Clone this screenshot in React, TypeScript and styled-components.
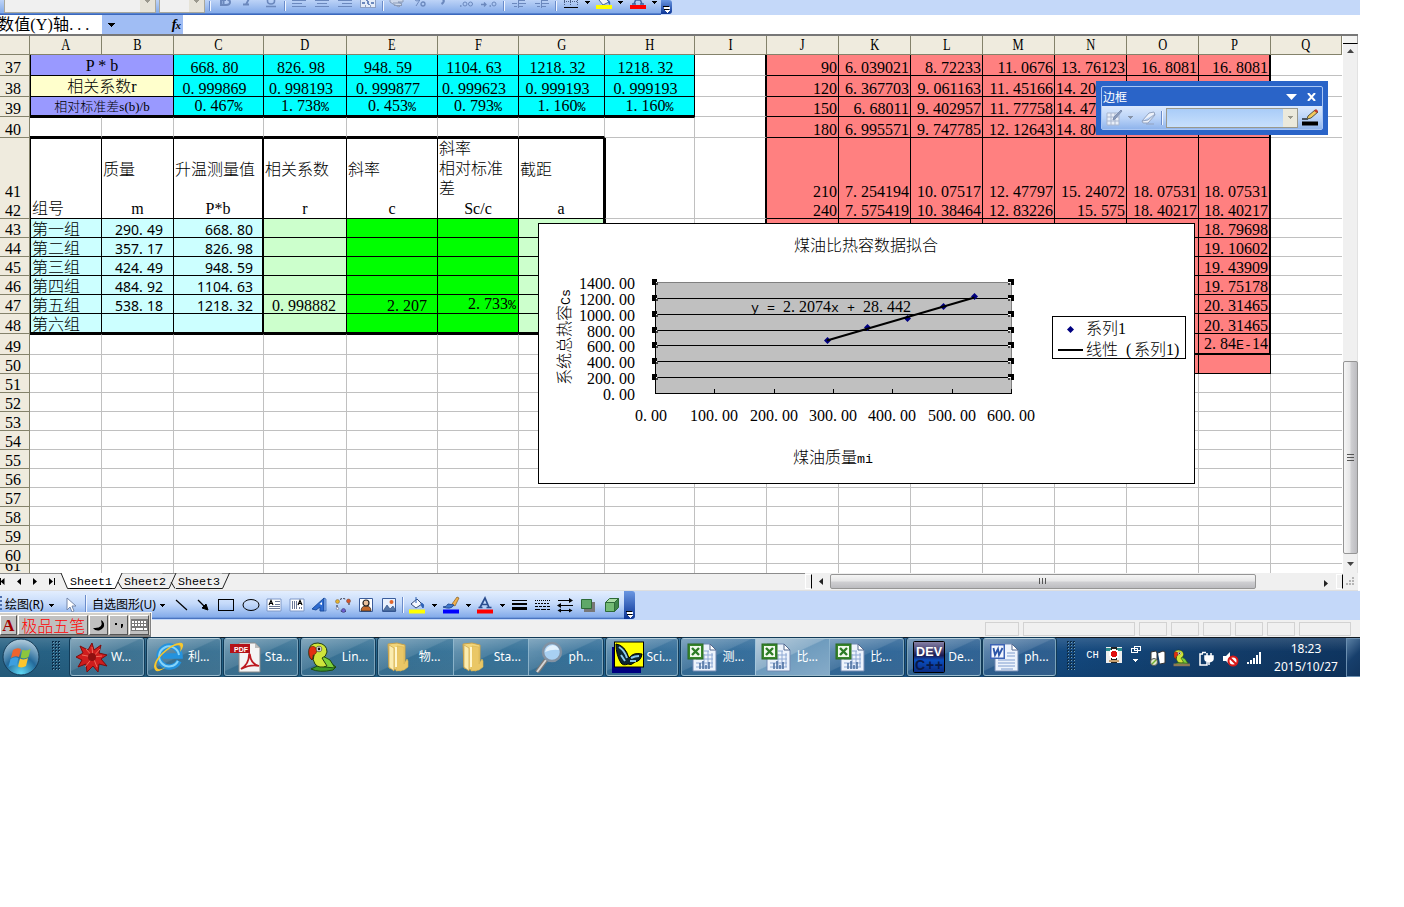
import React from "react";
import styled, { createGlobalStyle, css } from "styled-components";

const SERIF = `"Liberation Serif", "Noto Sans CJK SC", serif`;
const MONO = `"Liberation Mono", "Noto Sans CJK SC", monospace`;
const UI = `"Noto Sans", "Noto Sans CJK SC", sans-serif`;

const Global = createGlobalStyle`
  body { margin: 0; background: #fff; overflow: hidden; }
  * { box-sizing: border-box; }
`;

const Screen = styled.div`
  width: 1360px;
  height: 677px;
  position: relative;
  display: flex;
  flex-direction: column;
  overflow: hidden;
  background: #fff;
`;

/* ---------- text set on an 8px pitch ---------- */
const Dot = styled.span`
  letter-spacing: 4px;
`;
const Mono = styled.span`
  font-family: ${MONO};
  font-size: 13.33px;
`;
function Fixed({ text }: { text: string }) {
  return (
    <span>
      {text
        .split(/(\.|[%E\-])/)
        .filter(Boolean)
        .map((p, i) => (p === "." ? <Dot key={i}>.</Dot> : /[%E\-]/.test(p) ? <Mono key={i}>{p}</Mono> : p))}
    </span>
  );
}

/* ---------- top toolbar ---------- */
const TopBar = styled.div`
  display: flex;
  height: 15px;
  flex: none;
  background: #c4d8f9;
`;
const TopStrip = styled.div`
  display: flex;
  width: 661px;
  padding-left: 4px;
  background: linear-gradient(#bdd3f7, #84abe9 85%, #7ba2e2 86%, #3b68bd 93%);
  overflow: hidden;
`;
const Combo = styled.div<{ $w: number }>`
  width: ${(p) => p.$w}px;
  height: 13px;
  margin-right: 3px;
  display: flex;
  justify-content: flex-end;
  background: #f0f0f0;
  border: 1px solid #a9a89c;
  border-top: 0;
`;
const ComboArrow = styled.div`
  width: 15px;
  display: flex;
  justify-content: center;
  background: #e6e3d8;
`;
const Slot = styled.div<{ $w?: number }>`
  width: ${(p) => p.$w ?? 23}px;
  flex: none;
  display: flex;
  align-items: center;
  justify-content: center;
`;
const Sep = styled.div<{ $h: number; $m?: string }>`
  width: 2px;
  height: ${(p) => p.$h}px;
  margin: ${(p) => p.$m ?? "0 2px"};
  flex: none;
  align-self: center;
  background: linear-gradient(90deg, #6a8ccb 50%, #f1f6ff 50%);
`;
const Cap = styled.div<{ $h: number }>`
  width: 11px;
  height: ${(p) => p.$h}px;
  flex: none;
  display: flex;
  align-items: flex-end;
  justify-content: center;
  border-radius: 0 3px 3px 0;
  background: linear-gradient(#6a97e2, #0c3596);
`;
const CapMark = () => (
  <svg width="9" height="9" shapeRendering="crispEdges">
    <path d="M1 1h6" stroke="#000" strokeWidth="1" />
    <path d="M2 2.5h6" stroke="#fff" strokeWidth="2" />
    <path d="M1 4h6l-3 3z" fill="#000" />
    <path d="M2 5h6l-3 3z" fill="#fff" />
  </svg>
);
const Caret = ({ c = "#000" }: { c?: string }) => (
  <svg width="5" height="3" shapeRendering="crispEdges">
    <path d="M0 0h5v1h-1v1h-1v1h-1v-1h-1v-1h-1z" fill={c} />
  </svg>
);
const TopGlyph = styled.svg`
  width: 18px;
  height: 15px;
  display: block;
`;
const gc = "#6b88bd";

function TopToolbar() {
  const align = (s: number) => (
    <Slot key={s}>
      <TopGlyph shapeRendering="crispEdges">
        <path d={`M2 .5h14M${2 + s} 3.5h10M2 6.5h14`} stroke={gc} />
      </TopGlyph>
    </Slot>
  );
  return (
    <TopBar>
      <TopStrip>
        <Combo $w={152}>
          <ComboArrow>
            <Caret c="#9b998e" />
          </ComboArrow>
        </Combo>
        <Combo $w={46}>
          <ComboArrow>
            <Caret c="#9b998e" />
          </ComboArrow>
        </Combo>
        <Sep $h={10} $m="0 2px 4px 1px" />
        <Slot>
          <TopGlyph><path d="M5 -6h5q3 0 3 2.700t-2 2.600q3 .4 3 3t-4 2.700h-5zM7.500 0v4M5 0h5" fill="none" stroke={gc} strokeWidth="2" /></TopGlyph>
        </Slot>
        <Slot>
          <TopGlyph><path d="M12 -5L7 4.500M4 4.500h6" stroke={gc} strokeWidth="1.800" /></TopGlyph>
        </Slot>
        <Slot>
          <TopGlyph><path d="M5.500 -4v5q0 3 3.500 3t3.500-3v-5M4 6.500h10" fill="none" stroke={gc} strokeWidth="1.600" /></TopGlyph>
        </Slot>
        <Sep $h={10} $m="0 1px 4px 2px" />
        {[0, 2, 4].map(align)}
        <Slot>
          <TopGlyph shapeRendering="crispEdges">
            <path d="M1.500 -4v11h15v-11M1.500 -1h15M6.500 5v2M11.500 5v2" fill="#e4ecf8" stroke="#8b9fc4" />
            <path d="M3 2.500h3M12 2.500h3M8 0l2 5" stroke={gc} strokeWidth="2" />
          </TopGlyph>
        </Slot>
        <Sep $h={10} $m="0 1px 4px 3px" />
        <Slot>
          <TopGlyph><path d="M2 -1h13v3h-5l4 2-3 3-6-3-3-2zM6 5.500h8M5 3h9" fill="#cdd8ea" stroke="#8a9bb9" /></TopGlyph>
        </Slot>
        <Slot>
          <TopGlyph>
            <path d="M12 -5L5 6" stroke={gc} />
            <circle cx="6" cy="-1" r="2" fill="none" stroke={gc} />
            <circle cx="12" cy="4" r="2" fill="none" stroke={gc} strokeWidth="1.300" />
          </TopGlyph>
        </Slot>
        <Slot>
          <TopGlyph><path d="M9 -1q2 3-1.500 5" fill="none" stroke={gc} strokeWidth="2.200" /></TopGlyph>
        </Slot>
        <Slot>
          <TopGlyph>
            <circle cx="8" cy="4" r="2" fill="none" stroke={gc} />
            <circle cx="13.500" cy="4" r="2" fill="none" stroke={gc} />
            <path d="M3 6h1.500" stroke={gc} strokeWidth="1.500" />
          </TopGlyph>
        </Slot>
        <Slot>
          <TopGlyph>
            <path d="M1 4.500h5M4 2.500l2 2-2 2M9.500 6h1.500" fill="none" stroke={gc} strokeWidth="1.300" />
            <circle cx="14" cy="4" r="2" fill="none" stroke={gc} />
          </TopGlyph>
        </Slot>
        <Sep $h={10} $m="0 2px 4px 3px" />
        {[0, 1].map((k) => (
          <Slot key={k}>
            <TopGlyph shapeRendering="crispEdges">
              <path d="M2 3.500h5M9 0.500h6M9 3.500h7M4 6.500h3M9 6.500h4M8.500 -2v10" stroke={gc} />
            </TopGlyph>
          </Slot>
        ))}
        <Sep $h={10} $m="0 2px 4px 2px" />
        <Slot>
          <TopGlyph shapeRendering="crispEdges">
            <path d="M2.500 -4v10M8.500 -4v10M15.500 -4v10M2 1.500h14" stroke="#4b5f86" strokeDasharray="1 1" />
            <path d="M2 7.500h14" stroke="#000" />
          </TopGlyph>
        </Slot>
        <Slot $w={10}><Lift><Caret /></Lift></Slot>
        <Slot>
          <TopGlyph>
            <path d="M4 0l5-3 5 5-6 3z" fill="#eef3fb" stroke="#47659c" />
            <path d="M13 0q3 1 2 5-2-1-2-5z" fill="#2d62b8" />
            <path d="M1 7h16" stroke="#ff0" strokeWidth="4" />
          </TopGlyph>
        </Slot>
        <Slot $w={11}><Lift><Caret /></Lift></Slot>
        <Slot>
          <TopGlyph>
            <path d="M5 4L9 -6l4 10M6 0h6M3 4h4M11 4h4" stroke="#41619d" strokeWidth="1.500" fill="none" />
            <path d="M1 7h16" stroke="#f00" strokeWidth="4" />
          </TopGlyph>
        </Slot>
        <Slot $w={11}><Lift><Caret /></Lift></Slot>
      </TopStrip>
      <Cap $h={14}>
        <CapMark />
      </Cap>
    </TopBar>
  );
}
const Lift = styled.div`
  display: flex;
  padding-bottom: 11px;
`;

/* ---------- formula bar ---------- */
const FormulaBar = styled.div`
  display: flex;
  height: 19px;
  flex: none;
`;
const NameBox = styled.div`
  width: 102px;
  font: 16px/19px ${SERIF};
  white-space: nowrap;
  overflow: hidden;
`;
const NameText = styled.div`
  margin-left: -2px;
  letter-spacing: 0.15px;
`;
const NameDots = styled.span`
  letter-spacing: 4px;
`;
const NameBlue = styled.div`
  width: 81px;
  display: flex;
  align-items: center;
  justify-content: space-between;
  padding: 0 3px 0 6px;
  background: #a0bdf4;
  font: italic bold 14px/16px ${SERIF};
`;
const Fx = styled.span`
  letter-spacing: -1px;
  small {
    font-size: 11px;
  }
`;

/* ---------- worksheet ---------- */
const colWidths = [72, 72, 90, 83, 91, 81, 86, 90, 72, 72, 72, 72, 72, 72, 72, 72, 71];
const Work = styled.div`
  display: flex;
  height: 539px;
  flex: none;
  border-top: 2px solid #777;
  width: 1358px;
`;
const Sheet = styled.div`
  width: 1342px;
  height: 537px;
  overflow: hidden;
`;
const Row = styled.div<{ $h: number }>`
  display: grid;
  grid-template-columns: 30px ${colWidths.map((w) => w + "px").join(" ")};
  height: ${(p) => p.$h}px;
`;
const Head = styled.div`
  display: flex;
  align-items: center;
  justify-content: center;
  background: #efebde;
  border-right: 1px solid #84826b;
  border-bottom: 1px solid #84826b;
  font: 16px/16px ${SERIF};
  span {
    transform: scaleX(0.78);
  }
`;
const RowHead = styled.div`
  display: flex;
  align-items: flex-end;
  justify-content: center;
  padding-right: 3px;
  overflow: hidden;
  background: #efebde;
  border-right: 1px solid #84826b;
  border-bottom: 1px solid #84826b;
  font: 16px/15px ${SERIF};
`;

type CellSpec = {
  t?: string;
  bg?: string;
  al?: "left" | "center" | "right";
  mid?: boolean;
  span?: number;
  font?: "num" | "sans" | "txt" | "small";
  pr?: number;
  l?: number;
  r?: [number, string];
  b?: [number, string];
  top?: number;
};
const GRID = "#c0c0c0";
const K = "#000";

const Cell = styled.div<{ $c: CellSpec }>`
  min-width: 0;
  display: flex;
  font: 16px/15px ${SERIF};
  font-weight: 300;
  white-space: pre;
  ${({ $c: c }) => css`
    grid-column: span ${c.span ?? 1};
    align-items: ${c.mid ? "center" : "flex-end"};
    justify-content: ${c.al === "center" ? "center" : c.al === "left" ? "flex-start" : "flex-end"};
    background: ${c.bg ?? "#fff"};
    padding: 0 ${c.pr ?? 0}px 0 ${c.al === "left" ? 1 : 0}px;
    border: 0 solid ${K};
    border-right: ${(c.r ?? [1, GRID])[0]}px solid ${(c.r ?? [1, GRID])[1]};
    border-bottom: ${(c.b ?? [1, GRID])[0]}px solid ${(c.b ?? [1, GRID])[1]};
    border-left-width: ${c.l ?? 0}px;
    border-top-width: ${c.top ?? 0}px;
    ${c.font === "sans" && `font: 14px/15px "Noto Sans", sans-serif;`}
    ${c.font === "small" && `font-size: 13px;`}
    ${c.t && c.t.includes("\n") && "line-height: 20px;"}
  `}
`;
const SansDot = styled.span`
  letter-spacing: 4.200px;
`;

const heights: Record<number, number> = { 37: 21, 38: 21, 39: 20, 40: 21, 41: 60, 42: 21, 48: 20, 49: 21, 61: 10 };
const top3: Record<number, string[]> = {
  37: ["668.80", "826.98", "948.59", "1104.63", "1218.32", "1218.32"],
  38: ["0.999869", "0.998193", "0.999877", "0.999623", "0.999193", "0.999193"],
  39: ["0.467%", "1.738%", "0.453%", "0.793%", "1.160%", "1.160%"],
};
const right: Record<number, string[]> = {
  37: ["90", "6.039021", "8.72233", "11.0676", "13.76123", "16.8081", "16.8081"],
  38: ["120", "6.367703", "9.061163", "11.45166", "14.20", "", ""],
  39: ["150", "6.68011", "9.402957", "11.77758", "14.47", "", ""],
  40: ["180", "6.995571", "9.747785", "12.12643", "14.80", "", ""],
  41: ["210", "7.254194", "10.07517", "12.47797", "15.24072", "18.07531", "18.07531"],
  42: ["240", "7.575419", "10.38464", "12.83226", "15.575", "18.40217", "18.40217"],
  43: ["", "", "", "", "", "", "18.79698"],
  44: ["", "", "", "", "", "", "19.10602"],
  45: ["", "", "", "", "", "", "19.43909"],
  46: ["", "", "", "", "", "", "19.75178"],
  47: ["", "", "", "", "", "", "20.31465"],
  48: ["", "", "", "", "", "", "20.31465"],
  49: ["", "", "", "", "", "", "2.84E-14"],
  50: ["", "", "", "", "", "", ""],
};
const groups: Record<number, string[]> = {
  43: ["第一组", "290.49", "668.80"],
  44: ["第二组", "357.17", "826.98"],
  45: ["第三组", "424.49", "948.59"],
  46: ["第四组", "484.92", "1104.63"],
  47: ["第五组", "538.18", "1218.32"],
  48: ["第六组", "", ""],
};

function rowCells(n: number): CellSpec[] {
  const out: CellSpec[] = [];
  const blk: [number, string] = [1, K];
  if (n <= 39) {
    const b: [number, string] = n === 39 ? [2, K] : blk;
    const label = { 37: "P * b", 38: "相关系数r", 39: "相对标准差s(b)/b" }[n] as string;
    out.push({ t: label, span: 2, mid: true, al: "center", bg: n === 38 ? "#ffffcc" : "#9999ff", l: 1, r: blk, b, font: n === 39 ? "small" : "txt" });
    top3[n].forEach((t) => out.push({ t, al: "center", bg: "#00ffff", r: blk, b, font: "num", pr: n === 39 ? 0 : 8 }));
  } else if (n === 40) {
    for (let i = 0; i < 8; i++) out.push({ top: 1, b: i < 7 ? [2, K] : undefined });
  } else if (n === 41 || n === 42) {
    const t = n === 41 ? ["", "质量", "升温测量值", "相关系数", "斜率", "斜率\n相对标准\n差", "截距"] : ["组号", "m", "P*b", "r", "c", "Sc/c", "a"];
    t.forEach((s, i) =>
      out.push({ t: s, mid: true, al: n === 41 || i === 0 ? "left" : "center", l: i === 0 ? 1 : 0, top: n === 41 ? 1 : 0, r: i === 2 || i === 6 ? [2, K] : blk, b: blk, font: "txt" })
    );
    out.push({ l: 1 });
  } else if (n <= 48) {
    const g = groups[n];
    const b: [number, string] = n === 48 ? [2, K] : blk;
    out.push({ t: g[0], al: "left", bg: "#ccffff", l: 1, r: blk, b, font: "txt" });
    out.push({ t: g[1], bg: "#ccffff", r: blk, b, font: "sans", pr: 10 });
    out.push({ t: g[2], bg: "#ccffff", r: [2, K], b, font: "sans", pr: 9 });
    out.push({ t: n === 47 ? "0.998882" : "", bg: "#ccffcc", r: blk, b, font: "num", pr: 10 });
    out.push({ t: n === 47 ? "2.207" : "", bg: "#00ff00", r: blk, b, font: "num", pr: 10 });
    out.push({ t: n === 47 ? "2.733%" : "", bg: "#00ff00", r: blk, b, font: "num", pr: 2 });
    out.push({ bg: "#ccffcc", r: [2, K], b });
    out.push({ l: 1 });
  } else {
    for (let i = 0; i < 8; i++) out.push({ top: n === 49 && i < 7 ? 1 : 0 });
  }
  out.push(n <= 50 ? { r: [n < 50 ? 2 : 1, K] } : {});
  if (right[n])
    right[n].forEach((t, i) =>
      out.push({ t, al: i === 4 && t.length < 6 ? "left" : "right", bg: "#ff8080", font: "num", pr: i === 4 && t.length < 6 ? 0 : 1, r: i === 6 && n < 50 ? [2, K] : blk, b: n === 49 ? [2, K] : blk })
    );
  else for (let i = 0; i < 7; i++) out.push({});
  out.push({ r: [0, GRID] });
  return out;
}

function CellText({ c }: { c: CellSpec }) {
  if (!c.t) return null;
  if (c.font === "num") return <Fixed text={c.t} />;
  if (c.font === "sans") {
    const [a, b] = c.t.split(".");
    return (
      <span>
        {a}
        <SansDot>.</SansDot>
        {b}
      </span>
    );
  }
  return <span>{c.t}</span>;
}

function Worksheet() {
  const rows = Array.from({ length: 25 }, (_, i) => 37 + i);
  return (
    <Sheet>
      <Row $h={19}>
        <Head />
        {"ABCDEFGHIJKLMNOPQ".split("").map((l) => (
          <Head key={l}>
            <span>{l}</span>
          </Head>
        ))}
      </Row>
      {rows.map((n) => (
        <Row key={n} $h={heights[n] ?? 19}>
          <RowHead>{n}</RowHead>
          {rowCells(n).map((c, i) => (
            <Cell key={i} $c={c}>
              <CellText c={c} />
            </Cell>
          ))}
        </Row>
      ))}
    </Sheet>
  );
}

/* ---------- scrollbars ---------- */
const VScroll = styled.div`
  width: 16px;
  display: flex;
  flex-direction: column;
  align-items: center;
  background: #f0f0f0;
  border-left: 1px solid #fff;
  border-right: 1px solid #e2e2e2;
`;
const SplitV = styled.div`
  width: 15px;
  height: 8px;
  border-bottom: 1px solid #000;
  border-right: 1px solid #999;
  background: #f4f4f2;
`;
const VThumb = styled.div`
  width: 15px;
  height: 196px;
  margin-top: 303px;
  border: 1px solid #959595;
  border-radius: 2px;
  background: linear-gradient(90deg, #f5f5f5, #e6e6e7 45%, #cfcfd2 55%, #bcbcc0);
  display: flex;
  align-items: center;
  justify-content: center;
`;
const ArrowBox = styled.div<{ $w?: number; $h?: number }>`
  width: ${(p) => p.$w ?? 15}px;
  height: ${(p) => p.$h ?? 17}px;
  display: flex;
  align-items: center;
  justify-content: center;
`;

/* ---------- sheet tabs ---------- */
const TabBar = styled.div`
  display: flex;
  height: 18px;
  flex: none;
  background: #f0f0f0;
  border-bottom: 1px solid #dedede;
  width: 1358px;
`;
const TabArea = styled.div`
  width: 805px;
  display: flex;
  position: relative;
  border-top: 1px solid #8c8c8c;
`;
const TabShapes = styled.svg`
  position: absolute;
  left: 0;
  top: -1px;
`;
const TabNames = styled.div`
  position: relative;
  display: flex;
  gap: 12px;
  padding-left: 70px;
  font: 11.67px/16px ${MONO};
`;
const TabName = styled.span<{ $on?: boolean }>`
  width: 42px;
  border-bottom: ${(p) => (p.$on ? "1px solid #000" : "0")};
  height: 15px;
`;
const SplitH = styled.div<{ $w: number }>`
  width: ${(p) => p.$w}px;
  height: 15px;
  margin-top: 1px;
  border: 1px solid #fff;
  border-right: 1px solid #000;
  background: #f0f0f0;
`;
const HThumb = styled.div`
  width: 426px;
  height: 15px;
  margin-top: 1px;
  border: 1px solid #959595;
  border-radius: 2px;
  background: linear-gradient(#f5f5f5, #e6e6e7 45%, #cfcfd2 55%, #bcbcc0);
  display: flex;
  align-items: center;
  justify-content: center;
`;

/* ---------- drawing toolbar ---------- */
const DrawBar = styled.div`
  display: flex;
  height: 29px;
  flex: none;
  background: #c4d8f9;
`;
const DrawStrip = styled.div`
  width: 624px;
  height: 28px;
  display: flex;
  align-items: center;
  background: linear-gradient(#e3eefe, #c5dafa 45%, #83abea 94%, #4a74c0 96%);
  font: 12px/16px ${UI};
  white-space: nowrap;
`;
const Grip = styled.div`
  width: 2px;
  height: 18px;
  margin-right: 3px;
  background: repeating-linear-gradient(#4d6fae 0 2px, transparent 2px 4px);
`;
const Txt = styled.span<{ $w: number }>`
  width: ${(p) => p.$w}px;
  flex: none;
`;
const I = ({ children, crisp }: { children: React.ReactNode; crisp?: boolean }) => (
  <svg width="18" height="18" viewBox="0 0 18 18" fill="none" stroke="#000" shapeRendering={crisp ? "crispEdges" : undefined}>
    {children}
  </svg>
);

function DrawingToolbar() {
  return (
    <DrawBar>
      <DrawStrip>
        <Grip />
        <Txt $w={44}>绘图(R)</Txt>
        <Caret />
        <Slot $w={31}>
          <I>
            <path d="M6 2v12l3-3 2 5 2-1-2-5h4z" fill="#fff" stroke="#7487aa" />
          </I>
        </Slot>
        <Sep $h={20} $m="0 5px 0 0" />
        <Txt $w={68}>自选图形(U)</Txt>
        <Caret />
        <Slot $w={28}>
          <I><path d="M6 4l11 10" strokeWidth="1.200" /></I>
        </Slot>
        <Slot $w={20}>
          <I><path d="M4 4l8 8" strokeWidth="1.200" /><path d="M14 14l-6-2 4-4z" fill="#000" /></I>
        </Slot>
        <Slot $w={26}>
          <I crisp><path d="M1.500 3.500h15v11h-15z" /></I>
        </Slot>
        <Slot>
          <I><ellipse cx="9" cy="9" rx="8" ry="5.500" /></I>
        </Slot>
        <Slot>
          <I>
            <path d="M2 3h14v12h-14z" fill="#fff" stroke="#7d97c8" />
            <path d="M4 9l2-4.500 2 4.500M5 7.500h3" strokeWidth="1.200" />
            <path d="M10 5.500h5M10 8.500h5M4 10.500h11M4 12.500h11" stroke="#6b7896" />
          </I>
        </Slot>
        <Slot>
          <I>
            <path d="M2 3h14v12h-14z" fill="#fff" stroke="#7d97c8" />
            <path d="M10 9l2-4.500 2 4.500M11 7.500h3" strokeWidth="1.200" />
            <path d="M4.500 5v8M6.500 5v8M8.500 5v8M11.500 11v2M13.500 11v2" stroke="#6b7896" />
          </I>
        </Slot>
        <Slot>
          <I>
            <path d="M1 13L13 2v13h-4v-4l-4 3z" fill="#2e6bd0" stroke="#1d4f9f" />
            <path d="M13 2l2 1v12h-2z" fill="#8db5f4" stroke="#1d4f9f" strokeWidth=".6" />
            <path d="M8.500 8L11 6v3z" fill="#fff" stroke="none" />
          </I>
        </Slot>
        <Slot>
          <I>
            <path d="M6 3.500q3-2 6 0M15 7v3M12 15q-3 1.500-6-.5M3 11V8" strokeDasharray="2 1.500" stroke="#223" />
            <circle cx="3.500" cy="5.500" r="2" fill="#e3b02c" stroke="#765" strokeWidth=".5" />
            <circle cx="14.500" cy="5" r="2" fill="#d9542b" stroke="#643" strokeWidth=".5" />
            <circle cx="9.500" cy="14.500" r="2" fill="#6a5fd0" stroke="#336" strokeWidth=".5" />
            <circle cx="3.500" cy="12.500" r="1.200" fill="#fff" stroke="#446" strokeWidth=".5" />
          </I>
        </Slot>
        <Slot>
          <I>
            <path d="M2.500 2.500h13v13h-13z" fill="#fff" stroke="#3b5d9c" />
            <path d="M4 15q0-5 5-5t5 5z" fill="#c56a2a" stroke="#222" strokeWidth=".7" />
            <circle cx="9" cy="7" r="3" fill="#eac09a" stroke="#222" strokeWidth="1.200" />
          </I>
        </Slot>
        <Slot>
          <I>
            <path d="M2.500 2.500h13v13h-13z" fill="#e9f1fd" stroke="#3b5d9c" />
            <path d="M3 15l4-6 3 4 3-3 3 5z" fill="#5577a8" stroke="#23457c" strokeWidth=".6" />
            <circle cx="11.500" cy="6" r="2" fill="#e0662c" stroke="none" />
          </I>
        </Slot>
        <Sep $h={16} $m="0 2px" />
        <Slot $w={22}>
          <I>
            <path d="M3 8l6-5 5 5-6 4z" fill="#f4f8ff" stroke="#334b79" />
            <path d="M8 1v6M13 7q4 1 2 5-2-2-2-5z" fill="#2d62b8" stroke="#2d62b8" />
            <path d="M1 15.500h16" stroke="#ff0" strokeWidth="4" />
          </I>
        </Slot>
        <Slot $w={12}><Caret /></Slot>
        <Slot $w={22}>
          <I>
            <path d="M10 8l5-7 2 1-4 8z" fill="#f2b04c" stroke="#805a20" strokeWidth=".7" />
            <path d="M1 11q4 0 5-3l6 1q-3 5-11 2z" fill="#3f77cc" stroke="#254f96" />
            <path d="M1 15.500h16" stroke="#00f" strokeWidth="4" />
          </I>
        </Slot>
        <Slot $w={12}><Caret /></Slot>
        <Slot $w={22}>
          <I>
            <path d="M4 11.500L9 2l4 9.500M6 8.500h6M2.500 11.500h4M10.500 11.500h5" stroke="#2a4d8f" strokeWidth="1.700" />
            <path d="M1 15.500h16" stroke="#f00" strokeWidth="4" />
          </I>
        </Slot>
        <Slot $w={12}><Caret /></Slot>
        <Slot $w={22}>
          <I crisp><path d="M2 4.500h15" /><path d="M2 8h15" strokeWidth="2" /><path d="M2 12.500h15" strokeWidth="3" /></I>
        </Slot>
        <Slot>
          <I crisp>
            <path d="M2 4.500h15" strokeDasharray="1 1" />
            <path d="M2 7.500h15" strokeDasharray="2 1" />
            <path d="M2 10.500h15" strokeDasharray="3 1" />
            <path d="M2 13.500h15" strokeDasharray="5 1" />
          </I>
        </Slot>
        <Slot>
          <I>
            <path d="M2 4.500h13M3 9.500h14M3 14.500h13" strokeWidth="1.200" />
            <path d="M13 2l4 2.500-4 2.500zM5 7l-4 2.500 4 2.500zM5 12.500l-3.500 2 3.500 2zM13 12.500l3.500 2-3.500 2z" fill="#000" stroke="none" />
          </I>
        </Slot>
        <Slot $w={24}>
          <I><path d="M5 6h11v10h-11z" fill="#777" stroke="none" /><path d="M2.500 3.500h10v9h-10z" fill="#5fa869" stroke="#2d6b38" /></I>
        </Slot>
        <Slot>
          <I>
            <path d="M2.500 6.500h9v9h-9z" fill="#74bb74" stroke="#2d6b38" />
            <path d="M2.500 6.500l4-4h9l-4 4z" fill="#a9dba5" stroke="#2d6b38" />
            <path d="M11.500 6.500l4-4v9l-4 4z" fill="#3e8549" stroke="#2d6b38" />
          </I>
        </Slot>
      </DrawStrip>
      <Cap $h={28}>
        <CapMark />
      </Cap>
    </DrawBar>
  );
}

/* ---------- status bar ---------- */
const Status = styled.div`
  height: 17px;
  flex: none;
  display: flex;
  gap: 4px;
  padding: 2px 0 1px 985px;
  background: #f0f0f0;
`;
const Pane = styled.div<{ $w: number }>`
  width: ${(p) => p.$w}px;
  border: 1px solid #d2d2d2;
`;

/* ---------- input method bar ---------- */
const Ime = styled.div`
  position: absolute;
  left: 0;
  top: 612px;
  width: 152px;
  height: 25px;
  display: flex;
  gap: 1px;
  padding: 2px 2px 2px 0;
  background: #d4d0c8;
  border: solid #f5f5f5;
  border-width: 1px 1px 0 0;
  box-shadow: inset -1px -2px 0 #808080;
`;
const ImeKey = styled.div<{ $w: number }>`
  width: ${(p) => p.$w}px;
  height: 20px;
  display: flex;
  align-items: center;
  justify-content: center;
  background: #c0c0c0;
  border: 1px solid #fff;
  border-right-color: #555;
  border-bottom-color: #555;
  color: #f00;
  font: 300 16px/17px "Noto Sans CJK SC", sans-serif;
  white-space: nowrap;
`;
const ImeA = styled.span`
  font: bold 17px/17px ${SERIF};
  color: #a00000;
`;

/* ---------- taskbar ---------- */
const Taskbar = styled.div`
  height: 40px;
  flex: none;
  display: flex;
  border-top: 1px solid #101820;
  background: linear-gradient(rgba(255, 255, 255, 0.14), rgba(255, 255, 255, 0) 35%, rgba(0, 0, 0, 0.08)),
    linear-gradient(90deg, #276183, #20638c 35%, #1d5c92 60%, #134b83 76%, #123c69 90%, #0e345f);
`;
const StartBox = styled.div`
  width: 43px;
  display: flex;
  justify-content: center;
  padding-right: 1px;
`;
const DotGrip = styled.div<{ $w: number; $pl: number }>`
  width: ${(p) => p.$w}px;
  padding: 3px 0 0 ${(p) => p.$pl}px;
`;
const Dots = () => (
  <svg width="9" height="31" shapeRendering="crispEdges">
    {[0, 3, 6].map((x) =>
      Array.from({ length: 10 }, (_, i) => (
        <React.Fragment key={x + "-" + i}>
          <rect x={x} y={i * 3} width="2" height="2" fill="#0c2c48" />
          <rect x={x + 1} y={i * 3 + 1} width="1" height="1" fill="#6d9bb5" />
        </React.Fragment>
      ))
    )}
  </svg>
);
const Group = styled.div<{ $mr?: number }>`
  display: flex;
  height: 38px;
  margin-right: ${(p) => p.$mr ?? 3}px;
  border: 1px solid #a3c2d2;
  border-color: #b5cdd9 #7ba3ba #9bbccd;
  border-radius: 3px;
  box-shadow: 0 0 0 1px #123b58;
  overflow: hidden;
`;
const Task = styled.div<{ $w: number; $on?: boolean; $line?: boolean }>`
  width: ${(p) => p.$w}px;
  display: flex;
  align-items: center;
  padding-left: 5px;
  gap: 3px;
  color: #fff;
  font: 12px/18px ${UI};
  white-space: nowrap;
  border-left: ${(p) => (p.$line ? "1px solid rgba(190,220,235,.6)" : "0")};
  background: ${(p) =>
    p.$on
      ? "linear-gradient(155deg, #b9cddc, #8db0ca 45%, #6f9cbe 47%, #86abc8)"
      : "linear-gradient(155deg, rgba(255,255,255,.36), rgba(255,255,255,.2) 45%, rgba(255,255,255,.1) 47%, rgba(255,255,255,.14))"};
`;
const Ic = ({ children }: { children: React.ReactNode }) => (
  <svg width="32" height="32" viewBox="0 0 32 32" style={undefined}>
    {children}
  </svg>
);

const Excel = () => (
  <Ic>
    <path d="M6 3h17l6 6v21h-23z" fill="#edf3fc" stroke="#7189b2" />
    <path d="M23 3v6h6z" fill="#fff" stroke="#52698f" />
    <path d="M9 18h17M9 22h17M9 26h17M17 13v15M21 10v18M25 12v14M17 14h9M17 10h5" stroke="#8ea9d4" />
    <path d="M13 22v6M16 20v8M19 24v4M22 21v7" stroke="#496c9e" strokeWidth="1.500" />
    <rect x="1" y="3" width="15" height="15" fill="#37872b" stroke="#2a6a22" />
    <rect x="3" y="5" width="11" height="11" fill="#f1f9ed" />
    <path d="M5 7l7 7M12 7l-7 7" stroke="#2d7c26" strokeWidth="2.400" />
  </Ic>
);
const Folder = () => (
  <Ic>
    <path d="M4 3l9-1 8 2v20l-4 6-12-3z" fill="#f2d67a" stroke="#c8a24a" />
    <path d="M5 4l5 3v23l-5-4z" fill="#fbecae" stroke="#c8a24a" strokeWidth=".7" />
    <path d="M13 5l7 1v17l3-5 1 2v6l-4 3-8 1z" fill="#eac766" stroke="#d9b553" strokeWidth=".6" />
    <path d="M12 6v20" stroke="#fff6cd" strokeWidth="2" />
  </Ic>
);
const Parrot = () => (
  <>
    <path d="M4 28q8 4 22 1l3-3-8-6z" fill="#3f9b26" stroke="#1e4a12" />
    <path d="M9 15q8-1 14 4l5 8-10-1q-8 0-9-11z" fill="#7ed13b" stroke="#1e4a12" />
    <path d="M2 10Q2 2 11 2q9 1 9 9-1 5-5 6l5 8q-8 3-12-2-3-4-1-9l-2 5q-4-3-3-9z" fill="#cfe53b" stroke="#213d10" />
    <path d="M2 8q3-5 7-1 2 6-3 7l-1 5q-4-4-3-11z" fill="#e23012" stroke="#5a1408" strokeWidth=".6" />
    <circle cx="12" cy="8" r="2.800" fill="#fff" stroke="#222" strokeWidth=".6" />
    <circle cx="12" cy="8" r="1.400" fill="#111" />
  </>
);

function TaskbarRow() {
  return (
    <Taskbar>
      <StartBox>
        <svg width="40" height="39" viewBox="0 0 40 39">
          <defs>
            <radialGradient id="orb" cx=".5" cy=".95" r=".9">
              <stop offset="0" stopColor="#5fd8f4" />
              <stop offset=".5" stopColor="#246a9b" />
              <stop offset="1" stopColor="#a9c6d8" />
            </radialGradient>
          </defs>
          <circle cx="20" cy="19" r="18" fill="url(#orb)" stroke="#153c58" />
          <path d="M12 12q4-3 8-1l-2 8q-4-2-8 1z" fill="#f0642c" />
          <path d="M21.500 11.500q4 2 8-.5l-2 8q-4 2.500-8 .5z" fill="#8cc63e" />
          <path d="M9.500 21q4-3 8-1l-2 8q-4-2-8 1z" fill="#3d9fe0" />
          <path d="M19 20.500q4 2 8-.5l-2 8q-4 2.500-8 .5z" fill="#fcc62e" />
        </svg>
      </StartBox>
      <DotGrip $w={27} $pl={9}>
        <Dots />
      </DotGrip>
      <Group>
        <Task $w={72}>
          <Ic>
            <path d="M16 2l2 7 7-5-2 8 8 2-6 4 6 7-8-2-1 8-5-6-6 6-1-8-8 3 4-7-6-3 7-4-3-7 8 4z" fill="#cf1d1d" stroke="#7d0c0c" />
            <path d="M16 6l1 10 7-8M17 16l9-1M17 16l4 10M17 16l-8 10M17 16l-11-2M17 16l-7-8" stroke="#f06a5a" fill="none" />
            <circle cx="16" cy="16" r="4" fill="#8e1010" />
          </Ic>
          W...
        </Task>
      </Group>
      <Group>
        <Task $w={72}>
          <Ic>
            <path d="M26 20a10.500 10.500 0 1 1 1-5H10" fill="none" stroke="#2492dd" strokeWidth="5.500" />
            <path d="M25 20a10 10 0 1 1 1-6" fill="none" stroke="#86d4fa" strokeWidth="2" />
            <path d="M3 30Q-3 24 9 12 22 0 29 2q3 2-2 9 2-7-2-7-7 1-16 10Q1 23 4 27q2 3 9-1-6 5-10 4z" fill="#f9c82c" />
          </Ic>
          利...
        </Task>
      </Group>
      <Group>
        <Task $w={72}>
          <Ic>
            <path d="M9 2h16l5 5v24h-21z" fill="#f4f4f4" stroke="#8a8a8a" />
            <path d="M25 2v5h5z" fill="#bbb" />
            <rect x="0" y="3" width="20" height="9" fill="#b51218" />
            <text x="4" y="10.500" fontFamily="Liberation Sans, sans-serif" fontWeight="bold" fontSize="7" fill="#fff">PDF</text>
            <path d="M11 28q8-5 8-14 0-2 1 0 1 9 9 11-8-2-18 3z" fill="none" stroke="#bd1a20" strokeWidth="1.800" />
          </Ic>
          Sta...
        </Task>
      </Group>
      <Group>
        <Task $w={72}>
          <Ic><Parrot /></Ic>
          Lin...
        </Task>
      </Group>
      <Group>
        <Task $w={74}><Folder />物...</Task>
        <Task $w={75} $line><Folder />Sta...</Task>
        <Task $w={74} $line>
          <Ic>
            <path d="M12 19L3 31" stroke="#777" strokeWidth="4.500" />
            <path d="M12 19L3 31" stroke="#d5d5d5" strokeWidth="2" />
            <circle cx="18" cy="11" r="9" fill="#a8d0f2" stroke="#8292a3" strokeWidth="2.500" />
            <path d="M11 11q1-6 8-7 5 1 6 5-7-1-14 2z" fill="#e2f1fd" />
          </Ic>
          ph...
        </Task>
      </Group>
      <Group>
        <Task $w={71}>
          <Ic>
            <rect x="0" y="6" width="29" height="26" fill="#000080" />
            <rect x="2.500" y="1" width="29" height="25" fill="#ff0" stroke="#000" />
            <path d="M4 3q9 1 13 14 4-6 13-4-1 7-7 8-4 4-7 2-5 2-7-1Q4 14 4 3z" fill="#0d2530" stroke="#000" />
            <path d="M7 6q6 4 8 11M9 14l4 6M19 17q4-2 8-2M18 20h6" stroke="#8cc6e8" strokeWidth="2" fill="none" />
          </Ic>
          Sci...
        </Task>
      </Group>
      <Group>
        <Task $w={73}><Excel />测...</Task>
        <Task $w={74} $on $line><Excel />比...</Task>
        <Task $w={74} $line><Excel />比...</Task>
      </Group>
      <Group $mr={2}>
        <Task $w={72}>
          <Ic>
            <defs>
              <linearGradient id="dev" x2="0" y2="1">
                <stop offset="0" stopColor="#8a84a8" />
                <stop offset=".45" stopColor="#1b1b52" />
                <stop offset=".6" stopColor="#0a4fc0" />
                <stop offset="1" stopColor="#0a2a80" />
              </linearGradient>
            </defs>
            <rect x=".5" y=".5" width="31" height="31" rx="1" fill="url(#dev)" stroke="#000" />
            <text x="3" y="15" textLength="26" fontFamily="Liberation Sans, sans-serif" fontWeight="bold" fontSize="12.500" fill="#fff">DEV</text>
            <text x="2" y="29" textLength="28" fontFamily="Liberation Sans, sans-serif" fontWeight="bold" fontSize="14" fill="#0a1a48">C++</text>
          </Ic>
          De...
        </Task>
      </Group>
      <Group $mr={0}>
        <Task $w={71}>
          <Ic>
            <path d="M6 3h17l6 6v21h-23z" fill="#edf3fc" stroke="#7189b2" />
            <path d="M23 3v6h6z" fill="#fff" stroke="#52698f" />
            <path d="M18 12h8M18 15h8M9 19h17M9 22h17M9 25h17M12 28h12" stroke="#7f9cce" />
            <rect x="1" y="3" width="15" height="15" fill="#3c63b4" />
            <rect x="2.500" y="4.500" width="12" height="12" fill="#f3f6fd" />
            <path d="M4.500 7l1.500 7 3-6 1 6 3.500-7" fill="none" stroke="#2c55a8" strokeWidth="1.800" />
          </Ic>
          ph...
        </Task>
      </Group>
      <DotGrip $w={30} $pl={11}>
        <Dots />
      </DotGrip>
      <Lang>CH</Lang>
      <TrayItem $w={22}>
        <svg width="16" height="16" shapeRendering="crispEdges">
          <rect width="16" height="16" fill="#eee" />
          <path d="M0 1h16v3h-16z" fill="#2a8d8d" />
          <path d="M5 0h6v16h-6z" fill="#222" />
          <circle cx="8" cy="7" r="5" fill="#fff" />
          <circle cx="8" cy="7" r="3" fill="#e01010" />
          <path d="M3 14h10" stroke="#c8a070" strokeWidth="2" />
        </svg>
      </TrayItem>
      <TrayItem $w={21}>
        <svg width="10" height="18" fill="none" stroke="#fff" shapeRendering="crispEdges">
          <path d="M3.500 .500h6v4h-6zM.500 2.500h6v4h-6z" />
          <path d="M2 13h5l-2.500 3z" fill="#fff" stroke="none" />
        </svg>
      </TrayItem>
      <TrayItem>
        <svg width="18" height="18">
          <path d="M2 3l5-1 1 2v11l-6-1zM9 4l5-2 2 1v11l-5 1" fill="#fff" stroke="#333" />
          <circle cx="5" cy="13" r="3.500" fill="#dfe9c9" stroke="#555" />
          <path d="M3 15l4-4" stroke="#6fae2e" strokeWidth="1.500" />
        </svg>
      </TrayItem>
      <TrayItem>
        <svg width="18" height="18" viewBox="0 0 34 34">
          <Parrot />
          <path d="M1 30h31" stroke="#8d7a55" strokeWidth="5" />
        </svg>
      </TrayItem>
      <TrayItem>
        <svg width="18" height="18" fill="none" stroke="#fff" strokeWidth="1.500">
          <path d="M6 5h-3v11h7v-3M5 3.500h4" />
          <path d="M8 7h8v3q0 2-4 3-4-1-4-3zM10 7v-3M14 7v-3M12 13v3" fill="#fff" />
        </svg>
      </TrayItem>
      <TrayItem>
        <svg width="18" height="18">
          <path d="M2 7h3l4-4v13l-4-4h-3z" fill="#fff" />
          <circle cx="12" cy="12" r="4.500" fill="#fff" stroke="#d81818" strokeWidth="2" />
          <path d="M9 9l6 6" stroke="#d81818" strokeWidth="2" />
        </svg>
      </TrayItem>
      <TrayItem>
        <svg width="16" height="14" fill="#fff" shapeRendering="crispEdges">
          <path d="M1 11h2v2h-2zM4 9h2v4h-2zM7 7h2v6h-2zM10 4h2v9h-2zM13 1h2v12h-2z" />
        </svg>
      </TrayItem>
      <Clock>
        <span>18:23</span>
        <span>2015/10/27</span>
      </Clock>
      <ShowDesktop />
    </Taskbar>
  );
}
const Lang = styled.div`
  width: 17px;
  padding-top: 9px;
  color: #fff;
  font: 10.500px/16px ${MONO};
`;
const TrayItem = styled.div<{ $w?: number }>`
  width: ${(p) => p.$w ?? 24}px;
  height: ${(p) => (p.$w ? 34 : 39)}px;
  display: flex;
  align-items: center;
  justify-content: center;
`;
const Clock = styled.div`
  width: 80px;
  display: flex;
  flex-direction: column;
  align-items: center;
  padding-top: 2px;
  color: #fff;
  font: 12px/18px ${UI};
`;
const ShowDesktop = styled.div`
  width: 14px;
  border: 1px solid #6b8fb0;
  border-right: 0;
  background: linear-gradient(135deg, #5a7fa3, #173f6c 50%, #12355e);
`;

/* ---------- chart ---------- */
const ChartWin = styled.svg`
  position: absolute;
  left: 538px;
  top: 223px;
  display: block;
  background: #fff;
`;
/* Each glyph gets its own x: 16px for Han characters, 8px for the rest. */
function Label({ x, y, children }: { x: number; y: number; children: string }) {
  let cx = x;
  const runs: { s: string; latin: boolean; xs: number[] }[] = [];
  for (const ch of children) {
    const latin = /[A-Za-z+=]/.test(ch);
    const last = runs[runs.length - 1];
    if (last && last.latin === latin) {
      last.s += ch;
      last.xs.push(cx);
    } else runs.push({ s: ch, latin, xs: [cx] });
    cx += /[\u4e00-\u9fff]/.test(ch) ? 16 : 8;
  }
  return (
    <text y={y} fontFamily={SERIF} fontSize="16" fontWeight="300" xmlSpace="preserve">
      {runs.map((r, i) => (
        <tspan key={i} x={r.xs.join(" ")} fontFamily={r.latin ? MONO : undefined} fontSize={r.latin ? 13.33 : undefined}>
          {r.s}
        </tspan>
      ))}
    </text>
  );
}
function Chart() {
  const lines = [298, 314, 330, 345, 361, 377];
  const ticks = [655, 714, 774, 833, 892, 952, 1011];
  const pts = [[827, 340], [867, 327], [907, 318], [943, 306], [974, 296]];
  const ys = ["1400.00", "1200.00", "1000.00", "800.00", "600.00", "400.00", "200.00", "0.00"];
  const by = [289, 305, 321, 337, 352, 368, 384, 400];
  const xs: [string, number][] = [["0.00", 635], ["100.00", 690], ["200.00", 750], ["300.00", 809], ["400.00", 868], ["500.00", 928], ["600.00", 987]];
  const diamond = (x: number, y: number) => `M${x + 0.5} ${y - 3}l3.500 3.500-3.500 3.500-3.500-3.500z`;
  return (
    <ChartWin width="657" height="261" viewBox="538 223 657 261">
      <rect x="538.500" y="223.500" width="656" height="260" fill="#fff" stroke="#000" />
      <g shapeRendering="crispEdges">
        <rect x="655" y="282" width="357" height="112" fill="#c0c0c0" />
        <path d="M655 282.500h357M1011.500 282v112" stroke="#808080" />
        {lines.map((y) => (
          <path key={y} d={`M655 ${y + 0.5}h356`} stroke="#000" />
        ))}
        {ticks.map((x) => (
          <path key={x} d={`M${x + 0.5} 389v5`} stroke="#000" />
        ))}
        <path d="M655.500 282v112M655 393.500h357" stroke="#000" />
        {[282, ...lines].map((y) => (
          <React.Fragment key={y}>
            <path d={`M652 ${y - 3}h5v3h-2v3h-3zM1008 ${y - 3}h6v6h-3v-3h-3z`} fill="#000" />
            <path d={`M656 ${y}h2v3h-2zM1008 ${y}h2v3h-2z`} fill="#404040" />
            <path d={`M656 ${y + 0.5}h1M1008 ${y + 0.5}h3`} stroke="#fff" />
          </React.Fragment>
        ))}
      </g>
      {pts.map(([x, y]) => (
        <path key={x} d={diamond(x, y)} fill="#000080" />
      ))}
      <path d="M827 340.500L974.500 297.500" stroke="#000" strokeWidth="2" />
      <Label x={794} y={251}>煤油比热容数据拟合</Label>
      <Label x={751} y={312}>y = 2.2074x + 28.442</Label>
      {ys.map((t, i) => (
        <Label key={t} x={635 - t.length * 8} y={by[i]}>{t}</Label>
      ))}
      {xs.map(([t, x]) => (
        <Label key={t} x={x} y={421}>{t}</Label>
      ))}
      <Label x={793} y={463}>煤油质量mi</Label>
      <g transform="translate(570 385) rotate(-90)">
        <Label x={0} y={0}>系统总热容Cs</Label>
      </g>
      <rect x="1052.500" y="316.500" width="133" height="42" fill="#fff" stroke="#000" />
      <path d={diamond(1070, 329)} fill="#000080" />
      <path d="M1058 350h25" stroke="#000" strokeWidth="2" />
      <Label x={1086} y={334}>系列1</Label>
      <Label x={1086} y={355}>线性 (系列1)</Label>
    </ChartWin>
  );
}

/* ---------- floating border palette ---------- */
const Palette = styled.div`
  position: absolute;
  left: 1096px;
  top: 81px;
  width: 232px;
  height: 54px;
  padding: 5px;
  background: #2a64c8;
`;
const PaletteIn = styled.div`
  height: 44px;
  border: 1px solid #a9c6f4;
  border-radius: 2px;
`;
const PaletteTitle = styled.div`
  height: 19px;
  display: flex;
  align-items: center;
  padding: 0 6px 0 1px;
  gap: 10px;
  color: #fff;
  font: 12px/18px "Noto Sans CJK SC", sans-serif;
  span {
    flex: 1;
  }
`;
const PaletteTools = styled.div`
  height: 23px;
  display: flex;
  align-items: center;
  background: linear-gradient(#dce9fd, #b9d2f7 55%, #8fb4ec);
`;
const PaletteCombo = styled.div`
  width: 132px;
  height: 20px;
  margin-right: 3px;
  display: flex;
  justify-content: flex-end;
  align-items: stretch;
  border: 1px solid #99988c;
  background: linear-gradient(#a9ccf8, #c8e0fc);
`;
const PaletteArrow = styled.div`
  width: 14px;
  display: flex;
  align-items: center;
  justify-content: center;
  background: #ebe9dc;
`;

function BorderPalette() {
  return (
    <Palette>
      <PaletteIn>
        <PaletteTitle>
          <span>边框</span>
          <svg width="11" height="6"><path d="M0 0h11l-5.500 6z" fill="#fff" /></svg>
          <svg width="9" height="8"><path d="M1 0l7 8M8 0l-7 8" stroke="#fff" strokeWidth="2" /></svg>
        </PaletteTitle>
        <PaletteTools>
          <Slot $w={23}>
            <I>
              <path d="M2 4h12v12h-12zM2 8h12M2 12h12M6 4v12M10 4v12" stroke="#a9b6cf" fill="#e8eef8" />
              <path d="M8 11l1-3 7-7 1 1-7 8z" fill="#8b9dbd" stroke="#7d8fb2" />
            </I>
          </Slot>
          <Slot $w={10}><Caret c="#8793a8" /></Slot>
          <Slot $w={26}>
            <I><path d="M3 12l7-8 5-1 1 3-7 8h-5zM3 12l6-1 7-6M7 15h8" fill="#eef2fa" stroke="#93a3c0" /></I>
          </Slot>
          <Sep $h={14} $m="0 3px 0 0" />
          <PaletteCombo>
            <PaletteArrow><Caret c="#99988c" /></PaletteArrow>
          </PaletteCombo>
          <I>
            <path d="M1 10h6" strokeWidth="1.200" />
            <path d="M6 10l1-3 7-6 3 2-7 6z" fill="#f2c95c" stroke="#554" />
            <path d="M13 2l3 2 1-2-2-2z" fill="#c33b2c" stroke="none" />
            <path d="M1 14.500h16" strokeWidth="4" />
          </I>
        </PaletteTools>
      </PaletteIn>
    </Palette>
  );
}

export default function App() {
  return (
    <Screen>
      <Global />
      <TopToolbar />
      <FormulaBar>
        <NameBox>
          <NameText>
            数值(Y)轴<NameDots>...</NameDots>
          </NameText>
        </NameBox>
        <NameBlue>
          <svg width="7" height="4" shapeRendering="crispEdges"><path d="M0 0h7l-3.500 4z" /></svg>
          <Fx>f<small>x</small></Fx>
        </NameBlue>
      </FormulaBar>
      <Work>
        <Worksheet />
        <VScroll>
          <SplitV />
          <ArrowBox $h={14}><svg width="7" height="4"><path d="M0 4l3.500-4 3.500 4z" fill="#444" /></svg></ArrowBox>
          <VThumb>
            <svg width="7" height="8" shapeRendering="crispEdges"><path d="M0 1.500h7M0 4.500h7M0 7.500h7" stroke="#555" /></svg>
          </VThumb>
          <ArrowBox $h={19}><svg width="7" height="4"><path d="M0 0l3.500 4 3.500-4z" fill="#444" /></svg></ArrowBox>
        </VScroll>
      </Work>
      <TabBar>
        <TabArea>
          <TabShapes width="240" height="17">
            <path d="M115 15.500h42l5.500-15h-42zM169 15.500h47l6-15h-47z" fill="#f0f0f0" />
            <path d="M61 0l6.500 15.500h47.500l7-15.500z" fill="#fff" />
            <path d="M61 0l6.500 15.500h47.500l7-15.500M122 15.500h47l7-15.500M176 15.500h46.500l7-15.500M118 9l4 6.500M171 9l4 6.500" fill="none" stroke="#222" />
            <path d="M4.500 5v7l-4-3.500zM21 5v7l-4-3.500zM33 5v7l4-3.500zM49 5v7l4-3.500zM54 5h1v7h-1zM0 5h1v7h-1z" fill="#000" />
          </TabShapes>
          <TabNames>
            <TabName $on>Sheet1</TabName>
            <TabName>Sheet2</TabName>
            <TabName>Sheet3</TabName>
          </TabNames>
        </TabArea>
        <SplitH $w={7} />
        <ArrowBox $w={18}><svg width="4" height="7"><path d="M4 0v7l-4-3.500z" fill="#222" /></svg></ArrowBox>
        <HThumb>
          <svg width="8" height="7" shapeRendering="crispEdges"><path d="M.500 0v6M3.500 0v6M6.500 0v6" stroke="#555" /></svg>
        </HThumb>
        <ArrowBox $w={80}><Nudge><svg width="4" height="7"><path d="M0 0v7l4-3.500z" fill="#222" /></svg></Nudge></ArrowBox>
        <SplitH $w={7} />
        <ArrowBox $w={15}>
          <svg width="9" height="9" fill="#b5b5b5"><path d="M6 0h2v2h-2zM3 3h2v2h-2zM6 3h2v2h-2zM0 6h2v2h-2zM3 6h2v2h-2zM6 6h2v2h-2z" /></svg>
        </ArrowBox>
      </TabBar>
      <DrawingToolbar />
      <Status>
        {[34, 112, 28, 28, 28, 28, 28, 52].map((w, i) => (
          <Pane key={i} $w={w} />
        ))}
      </Status>
      <TaskbarRow />
      <Chart />
      <BorderPalette />
      <Ime>
        <ImeKey $w={17}><ImeA>A</ImeA></ImeKey>
        <ImeKey $w={71}>极品五笔</ImeKey>
        <ImeKey $w={19}>
          <svg width="13" height="13"><path d="M9 1q3 9-8 8 2 3 6 2.500 6-2 5-7Q11 1.500 9 1z" fill="#000" /></svg>
        </ImeKey>
        <ImeKey $w={19}>
          <svg width="12" height="10"><path d="M2 3h2v2h-2zM8 4h2v2l-1 2h-1z" fill="#000" /></svg>
        </ImeKey>
        <ImeKey $w={20}>
          <svg width="17" height="12" shapeRendering="crispEdges">
            <rect width="17" height="12" fill="#777" />
            <path d="M1 2.500h15M1 5.500h15" stroke="#fff" strokeWidth="2" strokeDasharray="2 1" />
            <path d="M1 9.500h3M5 9.500h7M13 9.500h3" stroke="#fff" strokeWidth="2" />
          </svg>
        </ImeKey>
      </Ime>
    </Screen>
  );
}
const Nudge = styled.div`
  padding-left: 60px;
`;
